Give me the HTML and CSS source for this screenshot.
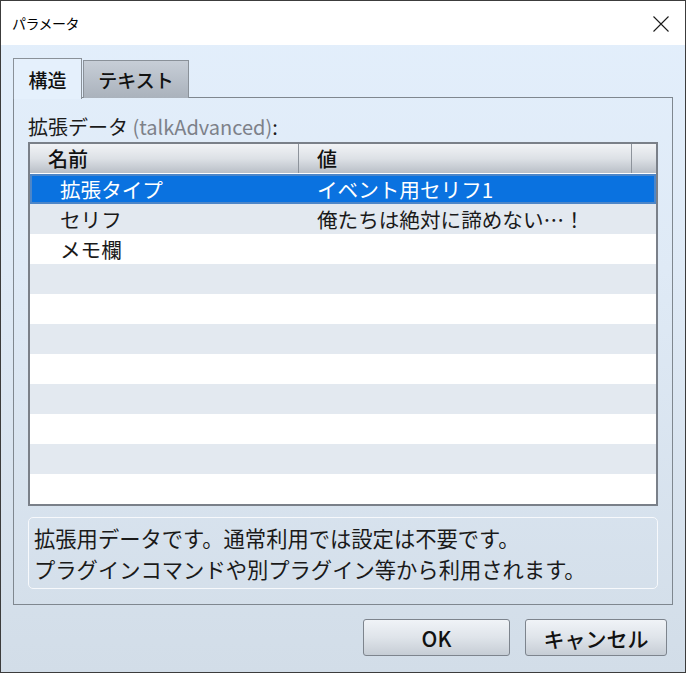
FILE: index.html
```html
<!DOCTYPE html>
<html lang="ja">
<head>
<meta charset="utf-8">
<title>パラメータ</title>
<link rel="stylesheet" href="styles.css">
</head>
<body>
<div class="window">
  <div class="titlebar">
    <span class="title">パラメータ</span>
    <svg class="close" width="16" height="16" viewBox="0 0 16 16"><path d="M0.5 0.5 L15.5 15.5 M15.5 0.5 L0.5 15.5" stroke="#1a1a1a" stroke-width="1.1" fill="none"/></svg>
  </div>
  <div class="content">
    <div class="tabs">
      <div class="tab active">構造</div>
      <div class="tab">テキスト</div>
    </div>
    <div class="panel">
      <div class="label">拡張データ <span class="key">(talkAdvanced)</span>:</div>
      <div class="table">
        <div class="thead">
          <div class="th c1">名前</div>
          <div class="th c2">値</div>
          <div class="th c3"></div>
        </div>
        <div class="row selected"><div class="td n">拡張タイプ</div><div class="td v">イベント用セリフ1</div></div>
        <div class="row alt"><div class="td n">セリフ</div><div class="td v">俺たちは絶対に諦めない…！</div></div>
        <div class="row"><div class="td n">メモ欄</div><div class="td v"></div></div>
        <div class="row alt"></div>
        <div class="row"></div>
        <div class="row alt"></div>
        <div class="row"></div>
        <div class="row alt"></div>
        <div class="row"></div>
        <div class="row alt"></div>
        <div class="row"></div>
      </div>
      <div class="desc">
        <div>拡張用データです。通常利用では設定は不要です。</div>
        <div>プラグインコマンドや別プラグイン等から利用されます。</div>
      </div>
    </div>
    <div class="buttons">
      <button class="btn ok">OK</button>
      <button class="btn cancel">キャンセル</button>
    </div>
  </div>
</div>
</body>
</html>
```
FILE: styles.css
```css
* { box-sizing: border-box; }
html, body { margin: 0; padding: 0; }
body {
  width: 686px;
  height: 673px;
  font-family: "Noto Sans CJK JP", "Noto Sans", sans-serif;
  color: #1a1a1a;
  overflow: hidden;
}
.window {
  width: 686px;
  height: 673px;
  border: 1px solid #3c3c3c;
  display: flex;
  flex-direction: column;
  background: linear-gradient(#e3effc 0%, #dfeaf6 40%, #d2dde8 100%);
}
.titlebar {
  height: 44px;
  background: #ffffff;
  display: flex;
  align-items: center;
  justify-content: space-between;
  padding: 0 16px 0 11px;
  flex: none;
}
.title {
  font-size: 14px;
  color: #000;
  letter-spacing: -0.5px;
}
.close { margin-top: 1px; }
.content {
  flex: 1;
  padding: 13px 12px 0 12px;
  display: flex;
  flex-direction: column;
}
.tabs {
  display: flex;
  height: 40px;
  align-items: flex-end;
  position: relative;
  z-index: 1;
  margin-bottom: -1px;
}
.tab {
  height: 38px;
  border: 1px solid #8a9199;
  border-bottom: none;
  display: flex;
  align-items: center;
  justify-content: center;
  font-size: 19px;
  font-weight: 500;
  color: #111;
  background: linear-gradient(#c7ced7, #aab2bc);
  width: 106px;
  margin-left: 1px;
}
.tab.active {
  width: 69px;
  height: 41px;
  margin-left: 0;
  background: #e5f0fc;
  margin-bottom: -1px;
}
.panel {
  width: 660px;
  border: 1px solid #7f878f;
  padding: 14px 14px 15px 14px;
  display: flex;
  flex-direction: column;
}
.label {
  height: 30px;
  line-height: 30px;
  font-size: 20px;
  color: #1a1a1a;
  white-space: nowrap;
}
.key { color: #7d8189; }
.table {
  width: 630px;
  border: 2px solid #7a8089;
  background: #ffffff;
}
.thead {
  display: flex;
  height: 30px;
  background: linear-gradient(#f1f3f6 0%, #dde1e6 50%, #b9bfc7 100%);
  border-bottom: 1px solid #ffffff;
}
.th {
  height: 29px;
  line-height: 29px;
  font-size: 20px;
  font-weight: 500;
  color: #111;
}
.c1 { width: 269px; border-right: 1px solid #8d939b; padding-left: 18px; }
.c2 { width: 333px; border-right: 1px solid #8d939b; padding-left: 18px; }
.c3 { width: 24px; }
.row {
  display: flex;
  height: 30px;
  background: #ffffff;
}
.row.alt { background: #e3e9f0; }
.row.selected {
  background: #0a72e0;
  box-shadow: inset 0 0 0 2px #4d86c8;
  color: #ffffff;
}
.td {
  line-height: 30px;
  font-size: 20.6px;
  white-space: nowrap;
}
.td.n { width: 269px; padding-left: 30px; }
.td.v { width: 357px; padding-left: 18px; }
.desc {
  margin-top: 11px;
  height: 72px;
  border: 1px solid #f7f9fc;
  border-radius: 5px;
  padding: 4px 5px;
  font-size: 21.3px;
  line-height: 31px;
  color: #1a1a1a;
  white-space: nowrap;
}
.buttons {
  display: flex;
  justify-content: flex-end;
  gap: 15px;
  margin-top: 14px;
  padding-right: 6px;
}
.btn {
  height: 37px;
  border: 1px solid #7d848d;
  border-radius: 3px;
  background: linear-gradient(#f0f3f7 0%, #dfe4ea 50%, #c6cdd5 100%);
  font-family: "Noto Sans CJK JP", "Noto Sans", sans-serif;
  font-size: 21px;
  font-weight: 500;
  color: #111;
  padding: 0;
}
.btn.ok { width: 147px; }
.btn.cancel { width: 142px; }
```
